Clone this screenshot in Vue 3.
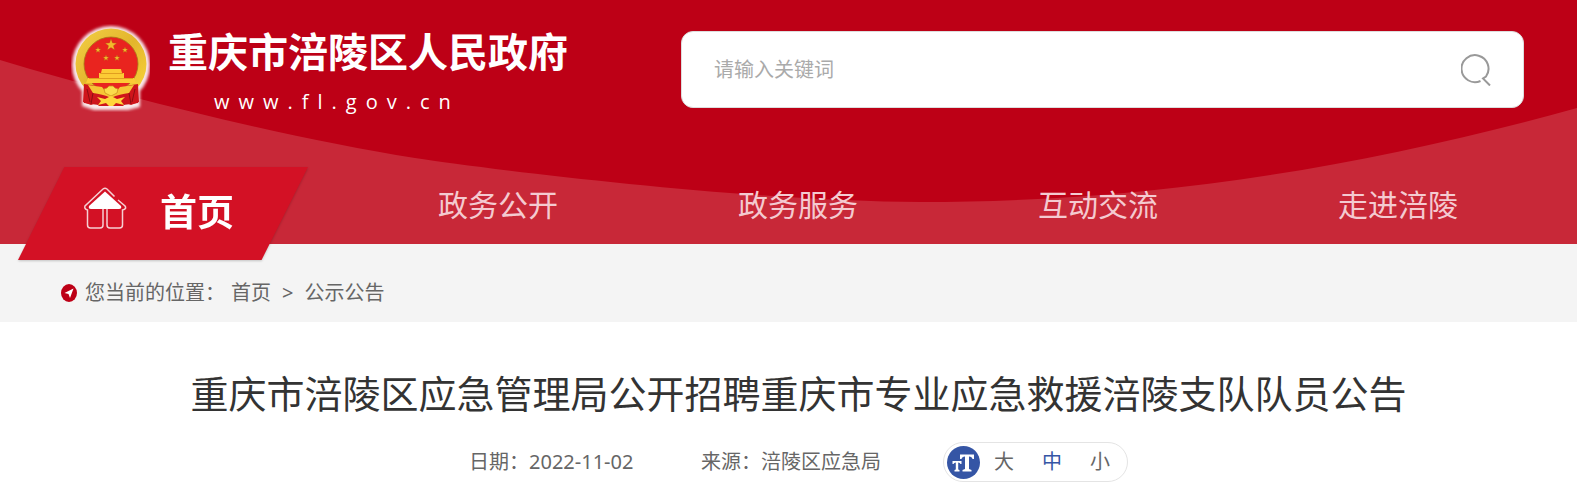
<template>
    <div class="page">
        <header class="header">
            <!-- Curved backdrop -->
            <svg class="backdrop" viewBox="0 0 1577 244" preserveAspectRatio="none" aria-hidden="true">
                <path d="M0 60C130 99 290 138 415 158C500 171 760 202 920 202C1150 202 1360 168 1577 108V244H0Z" fill="#c82838" />
            </svg>

            <div class="brand-row">
                <a class="brand" href="#">
                    <svg class="emblem" viewBox="0 0 79 88" aria-hidden="true">
                        <defs>
                            <filter id="glow" x="-20%" y="-20%" width="140%" height="140%">
                                <feGaussianBlur stdDeviation="1.6" />
                            </filter>
                            <linearGradient id="gold" x1="0" y1="0" x2="1" y2="1">
                                <stop offset="0" stop-color="#f2cf45" />
                                <stop offset="0.5" stop-color="#e3b52c" />
                                <stop offset="1" stop-color="#fbd83c" />
                            </linearGradient>
                        </defs>
                        <g filter="url(#glow)" fill="#fff" opacity="0.9">
                            <circle cx="40" cy="41" r="39" />
                            <path d="M11 58H69V83L57 86H23L11 82Z" />
                        </g>
                        <path d="M13 59L27 64L28 81L20 80L13 79ZM67 59L53 64L52 81L60 80L67 79Z" fill="#c9141a" />
                        <circle cx="40" cy="40" r="35.5" fill="url(#gold)" />
                        <circle cx="40" cy="40" r="27" fill="#e9241f" stroke="#a87718" stroke-width="0.8" />
                        <path v-for="(s, i) in stars" :key="i" :d="starPath(s)" fill="#f3b92c" stroke="#a8620f" stroke-width="0.3" />
                        <path d="M31 45H50L51 49H53V54H63L65 59H15L17 54H28V49H30Z" fill="#fccb35" />
                        <path d="M29 49.500H52M18 54.500H62" stroke="#d9921c" stroke-width="0.8" />
                        <path d="M13 60L26 62C31 68 35 70 40 70C45 70 49 68 54 62L67 60L68 78L60 81L55 79L52 82H28L25 79L20 81L12 78Z" fill="#cf151b" />
                        <path d="M17 61L31 63L35 68L40 71L45 68L49 63L63 61L58 69C52 70 46 71 40 74C34 71 28 70 22 69Z" fill="#f6c636" />
                        <path d="M36 64L38 62H42L44 64L47 65L46 69L40 72L34 69L33 65Z" fill="#fbdc4b" stroke="#c98a1b" stroke-width="0.7" />
                        <path d="M26 73L34 75L40 72L46 75L54 73L50 77L53 81L45 79L42 82H38L35 79L27 81L30 77Z" fill="#ffd63b" />
                        <path d="M16 65L19 78M22 69L20 80M64 65L61 78M58 69L60 80" stroke="#8e0d12" stroke-width="1" />
                    </svg>
                    <span class="brand-text">
                        <strong class="site-name">重庆市涪陵区人民政府</strong>
                        <span class="site-url">www.fl.gov.cn</span>
                    </span>
                </a>

                <form class="search" role="search" @submit.prevent>
                    <input v-model="keyword" type="text" placeholder="请输入关键词" aria-label="请输入关键词" />
                    <button type="submit" aria-label="搜索">
                        <svg viewBox="0 0 30 32" fill="none" stroke="#999" stroke-width="2" aria-hidden="true">
                            <path d="M19.500 27A13.500 13.500 0 1 1 25 22.500L22 24.500L29 31.500" />
                        </svg>
                    </button>
                </form>
            </div>

            <nav class="nav">
                <a class="home" href="#">
                    <span class="home-shape">
                        <svg viewBox="0 0 44 42" aria-hidden="true">
                            <path d="M22 4.500L38 19Q39 22 36 22H8Q5 22 6 19Z" fill="#fff" />
                            <path d="M31.500 9.500L24 2Q22 0.500 20 2L2 19Q1 22 4.500 23V38Q4.500 41 7.500 41H17Q20 41 20 38V22M24 22V38Q24 41 27 41H36.500Q39.500 41 39.500 38V23Q44 22 42 19L35 13" fill="none" stroke="#fff" stroke-opacity="0.8" stroke-width="1.500" />
                        </svg>
                        <span>首页</span>
                    </span>
                </a>
                <a v-for="item in navItems" :key="item" class="nav-item" href="#">{{ item }}</a>
            </nav>
        </header>

        <div class="crumbs">
            <svg viewBox="0 0 16 18" aria-hidden="true">
                <ellipse cx="8" cy="9" rx="8" ry="9" fill="#bd0016" />
                <path d="M12.500 4.500L9 14L7.500 10L3.500 9Z" fill="#fff" />
            </svg>
            <span class="crumbs-label">您当前的位置：</span>
            <a href="#">首页</a>
            <span class="crumbs-sep">&gt;</span>
            <a href="#">公示公告</a>
        </div>

        <main class="article">
            <h1>重庆市涪陵区应急管理局公开招聘重庆市专业应急救援涪陵支队队员公告</h1>
            <div class="meta">
                <span class="date">日期：2022-11-02</span>
                <span>来源：涪陵区应急局</span>
                <div class="sizes">
                    <svg viewBox="0 0 33 33" aria-hidden="true">
                        <circle cx="16.500" cy="16.500" r="16.500" fill="#3555a5" />
                        <path d="M13 8.500H27V13H25.500Q25 10.500 22 10.500V23L24.500 24V25.500H15.500V24L18 23V10.500Q15 10.500 14.500 13H13Z" fill="#fff" />
                        <path d="M5.500 15H14.500V18H13.500Q13 16.500 11.200 16.500V23.500L12.500 24V25.500H7.500V24L8.800 23.500V16.500Q7 16.500 6.500 18H5.500Z" fill="#fff" />
                    </svg>
                    <button v-for="size in sizes" :key="size" type="button" :class="{ active: size === current }"
                        @click="current = size">{{ size }}</button>
                </div>
            </div>
        </main>
    </div>
</template>

<script setup>
import { ref } from 'vue'

const keyword = ref('')
const navItems = ['政务公开', '政务服务', '互动交流', '走进涪陵']
const sizes = ['大', '中', '小']
const current = ref('中')

const stars = [
    { x: 40, y: 21, r: 6 },
    { x: 27, y: 26, r: 3 },
    { x: 54, y: 26, r: 3 },
    { x: 35, y: 34, r: 3 },
    { x: 46, y: 34, r: 3 },
]

function starPath({ x, y, r }) {
    const points = []
    for (let i = 0; i < 10; i++) {
        const radius = i % 2 ? r * 0.42 : r
        const angle = (Math.PI / 5) * i - Math.PI / 2
        points.push(`${(x + radius * Math.cos(angle)).toFixed(2)} ${(y + radius * Math.sin(angle)).toFixed(2)}`)
    }
    return `M${points.join('L')}Z`
}
</script>

<style>
body {
    margin: 0;
    background: #fff;
}
</style>

<style scoped>
.page {
    font-family: "Noto Sans", "Noto Sans CJK SC", sans-serif;
    font-size: 20px;
    line-height: 30px;
    color: #666;
}

a {
    color: inherit;
    text-decoration: none;
}

button {
    padding: 0;
    border: 0;
    background: none;
    font: inherit;
    color: inherit;
    cursor: pointer;
}

svg {
    display: block;
    flex-shrink: 0;
}

.header {
    position: relative;
    background: #bd0016;
}

.backdrop {
    position: absolute;
    inset: 0;
    width: 100%;
    height: 100%;
}

.brand-row {
    position: relative;
    display: grid;
    grid-template-columns: 610fr 843fr;
    align-items: start;
    padding: 24px 53px 0 71px;
}

.brand {
    display: flex;
    gap: 18px;
    color: #fff;
}

.emblem {
    width: 79px;
    height: 88px;
}

.brand-text {
    display: flex;
    flex-direction: column;
    white-space: nowrap;
}

.site-name {
    font-size: 40px;
    line-height: 56px;
}

.site-url {
    padding-left: 46px;
    font-family: "Open Sans", sans-serif;
    line-height: 44px;
    letter-spacing: 9px;
}

.search {
    display: flex;
    align-items: center;
    height: 77px;
    margin-top: 7px;
    padding: 0 32px;
    box-sizing: border-box;
    border: 1px solid #ddd;
    border-radius: 12px;
    background: #fff;
}

.search input {
    flex: 1;
    min-width: 0;
    padding: 0;
    border: 0;
    outline: 0;
    background: none;
    font: inherit;
    color: #333;
}

.search input::placeholder {
    color: #aaa;
    opacity: 1;
}

.search svg {
    width: 30px;
    height: 32px;
}

.nav {
    position: relative;
    display: flex;
    height: 77px;
    margin-top: 43px;
    padding: 0 29px 0 18px;
}

.home {
    flex: 0 0 290px;
    height: 93px;
    margin-right: 40px;
    filter: drop-shadow(0 1px 1px rgba(0, 0, 0, 0.2));
}

.home-shape {
    display: flex;
    align-items: center;
    gap: 33px;
    height: 100%;
    padding: 0 0 4px 65px;
    box-sizing: border-box;
    background: #d31125;
    clip-path: polygon(16% 0, 100% 0, 84% 100%, 0 100%);
    font-size: 37px;
    font-weight: bold;
    color: #fff;
}

.home-shape svg {
    width: 44px;
    height: 42px;
    margin-bottom: 8px;
}

.nav-item {
    flex: 1;
    font-size: 30px;
    line-height: 76px;
    text-align: center;
    white-space: nowrap;
    color: #f4cad0;
}

.crumbs {
    display: flex;
    align-items: center;
    height: 78px;
    padding: 20px 61px 0;
    box-sizing: border-box;
    background: #f4f4f4;
}

.crumbs svg {
    width: 16px;
    height: 18px;
}

.crumbs-label {
    margin: 0 6px 0 8px;
}

.crumbs-sep {
    margin: 0 11px;
}

.article {
    padding: 43px 0 0 20px;
    text-align: center;
}

h1 {
    margin: 0;
    font-size: 38px;
    font-weight: normal;
    line-height: 56px;
    color: #333;
}

.meta {
    display: flex;
    justify-content: center;
    align-items: center;
    gap: 62px;
    margin-top: 21px;
}

.date {
    min-width: 170px;
    text-align: left;
}

.sizes {
    display: flex;
    align-items: center;
    padding: 2px 3px;
    border: 1px solid #e4e4e4;
    border-radius: 20px;
}

.sizes svg {
    width: 33px;
    height: 33px;
}

.sizes button {
    width: 48px;
    line-height: 34px;
}

.sizes .active {
    color: #3555a5;
}
</style>
